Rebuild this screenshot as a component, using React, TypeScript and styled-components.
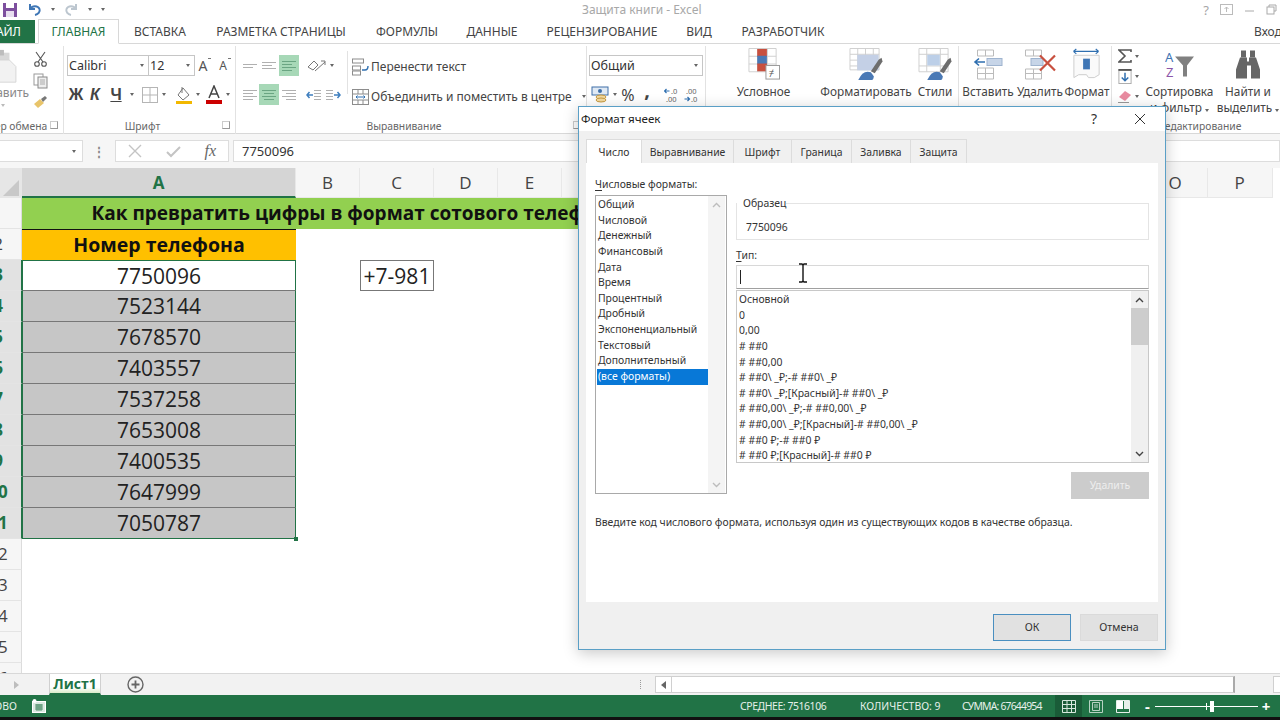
import styled, { createGlobalStyle } from "styled-components";

const GlobalStyle = createGlobalStyle`
  html, body { margin: 0; padding: 0; background: #fff; }
  body { font-family: "Noto Sans", "Open Sans", sans-serif; color: #444; }
`;

const CELL_FONT = `"Open Sans", "Noto Sans", sans-serif`;

const COLUMNS = ["A", "B", "C", "D", "E", "F", "G", "H", "I", "J", "K", "L", "M", "N", "O", "P"];
const PHONES = ["7750096", "7523144", "7678570", "7403557", "7537258", "7653008", "7400535", "7647999", "7050787"];
const CATEGORIES = ["Общий", "Числовой", "Денежный", "Финансовый", "Дата", "Время", "Процентный", "Дробный", "Экспоненциальный", "Текстовый", "Дополнительный", "(все форматы)"];
const CODES = [
  "Основной", "0", "0,00", "# ##0", "# ##0,00", "# ##0\\ _₽;-# ##0\\ _₽", "# ##0\\ _₽;[Красный]-# ##0\\ _₽",
  "# ##0,00\\ _₽;-# ##0,00\\ _₽", "# ##0,00\\ _₽;[Красный]-# ##0,00\\ _₽", "# ##0 ₽;-# ##0 ₽", "# ##0 ₽;[Красный]-# ##0 ₽",
];

const Root = styled.div`
  position: relative;
  width: 1280px;
  height: 720px;
  overflow: hidden;
  display: flex;
  flex-direction: column;
  background: #fff;
`;

const Gap = styled.span<{ $w: number }>`
  width: ${(p) => p.$w}px;
  flex: none;
`;

/* title bar + tabs */
const TitleBar = styled.div`
  position: relative;
  height: 19px;
  display: flex;
  align-items: center;
  gap: 9px;
  padding: 0 2px;
`;

const TitleText = styled.div`
  position: absolute;
  left: 582px;
  top: 0;
  font-size: 12px;
  line-height: 19px;
  color: #a8a8a8;
  white-space: nowrap;
`;

const WindowButtons = styled.div`
  margin-left: auto;
  display: flex;
  align-items: center;
  gap: 11px;
  color: #a6a6a6;
  font-size: 13px;
`;

const TabBar = styled.div`
  height: 25px;
  display: flex;
  align-items: stretch;
  border-bottom: 1px solid #d8d8d8;
  box-sizing: border-box;
`;

const FileTab = styled.div`
  width: 35px;
  background: #217346;
  color: #fff;
  font-size: 12px;
  line-height: 24px;
  overflow: hidden;
  margin-top: 1px;
  white-space: nowrap;
  padding-right: 14px;
  box-sizing: border-box;
  direction: rtl;
`;

const RibbonTab = styled.div<{ $active?: boolean; $width: number }>`
  width: ${(p) => p.$width}px;
  flex: none;
  text-align: center;
  font-size: 12px;
  line-height: 25px;
  white-space: nowrap;
  color: ${(p) => (p.$active ? "#217346" : "#444")};
  ${(p) => p.$active && `
    background: #fff;
    border: 1px solid #d8d8d8;
    border-bottom: 1px solid #fff;
    height: 25px;
    box-sizing: border-box;
    line-height: 24px;
  `}
`;

const SignIn = styled.div`
  margin-left: auto;
  font-size: 12px;
  line-height: 25px;
  color: #444;
  width: 26px;
  overflow: hidden;
  white-space: nowrap;
`;

/* ribbon */
const Ribbon = styled.div`
  height: 90px;
  display: flex;
  border-bottom: 1px solid #d8d8d8;
  box-sizing: border-box;
`;

const Group = styled.div<{ $width: number; $noline?: boolean }>`
  position: relative;
  width: ${(p) => p.$width}px;
  flex: none;
  display: flex;
  flex-direction: column;
  box-sizing: border-box;
  border-right: ${(p) => (p.$noline ? "none" : "1px solid #e2e2e2")};
  margin: 2px 0 -1px;
  overflow: hidden;
`;

const GroupBody = styled.div`
  flex: 1;
  display: flex;
  min-height: 0;
`;

const GroupLabel = styled.div<{ $shift?: number }>`
  height: 18px;
  font-size: 10.3px;
  line-height: 20px;
  color: #666;
  text-align: center;
  white-space: nowrap;
  position: relative;
  left: ${(p) => p.$shift ?? 0}px;
  flex: none;
`;

const Launcher = styled.span`
  position: absolute;
  right: 5px;
  bottom: 5px;
  width: 6px;
  height: 6px;
  border-left: 1px solid #ccc;
  border-top: 1px solid #ccc;
  border-right: 1px solid #999;
  border-bottom: 1px solid #999;
`;

const ClipColumn = styled.div`
  display: flex;
  flex-direction: column;
  align-items: center;
  width: 66px;
  flex: none;
  margin-left: -30px;
  padding-top: 3px;
  font-size: 12px;
  line-height: 16px;
  color: #8a8a8a;
  svg { margin-bottom: 1px; }
`;

const ClipSide = styled.div`
  display: flex;
  flex-direction: column;
  gap: 6px;
  padding: 5px 0 0;
  margin-left: -3px;
`;

const StackRows = styled.div<{ $width?: number }>`
  flex: ${(p) => (p.$width ? "none" : 1)};
  width: ${(p) => (p.$width ? `${p.$width}px` : "auto")};
  display: flex;
  flex-direction: column;
  padding-top: 9px;
  gap: 8px;
`;

const ToolRow = styled.div<{ $gap?: number; $pad?: number }>`
  display: flex;
  align-items: center;
  height: 21px;
  gap: ${(p) => p.$gap ?? 0}px;
  padding-left: ${(p) => p.$pad ?? 0}px;
`;

const SelectBox = styled.div<{ $width: number }>`
  width: ${(p) => p.$width}px;
  height: 21px;
  box-sizing: border-box;
  border: 1px solid #c6c6c6;
  font-size: 12.5px;
  line-height: 19px;
  padding-left: 1px;
  position: relative;
  flex: none;
  color: #333;
  & + & { margin-left: -1px; }
`;

const Caret = styled.span<{ $inline?: boolean }>`
  display: inline-block;
  width: 0;
  height: 0;
  border-left: 2.5px solid transparent;
  border-right: 2.5px solid transparent;
  border-top: 3px solid #666;
  flex: none;
  ${(p) => !p.$inline && `
    position: absolute;
    right: 4px;
    top: 8px;
  `}
`;

const PasteCaret = styled(Caret)`
  margin-top: 3px;
  border-top-color: #bbb;
`;

const NameCaret = styled(Caret)`
  right: 6px;
  top: 9px;
`;

const StyleBold = styled.span<{ $width: number; $italic?: boolean; $under?: boolean }>`
  width: ${(p) => p.$width}px;
  text-align: center;
  font-family: "Liberation Sans", sans-serif;
  font-weight: 700;
  font-size: 16px;
  color: #444;
  font-style: ${(p) => (p.$italic ? "italic" : "normal")};
  text-decoration: ${(p) => (p.$under ? "underline" : "none")};
  flex: none;
`;

const GrowFont = styled.span<{ $small?: boolean }>`
  font-size: ${(p) => (p.$small ? 12 : 14)}px;
  line-height: 16px;
  color: #555;
  width: 20px;
  text-align: center;
  flex: none;
  position: relative;
  left: -2px;
  &::after {
    content: "";
    position: absolute;
    right: 2px;
    top: 0;
    width: 3px;
    height: 1px;
    background: #777;
  }
`;

const Percent = styled.span`
  font-size: 16px;
  width: 20px;
  text-align: center;
  flex: none;
`;

const Comma = styled.span`
  font-size: 20px;
  font-weight: 700;
  width: 18px;
  height: 24px;
  text-align: center;
  line-height: 14px;
  flex: none;
`;

const ToolCell = styled.span<{ $active?: boolean; $width?: number }>`
  width: ${(p) => p.$width ?? 20}px;
  height: ${(p) => (p.$active ? 21 : 19)}px;
  display: flex;
  align-items: center;
  justify-content: center;
  background: ${(p) => (p.$active ? "#a7d8b7" : "transparent")};
  flex: none;
`;

const InnerLine = styled.div`
  width: 1px;
  background: #e2e2e2;
  margin: 5px 0 22px;
  flex: none;
`;

const WrapRows = styled.div`
  display: flex;
  flex-direction: column;
  padding: 10px 0 0 4px;
  gap: 9px;
`;

const WrapRow = styled.div`
  display: flex;
  align-items: center;
  gap: 2px;
  font-size: 12px;
  height: 21px;
  color: #444;
  white-space: nowrap;
`;

const BigTool = styled.div<{ $width: number }>`
  width: ${(p) => p.$width}px;
  flex: none;
  display: flex;
  flex-direction: column;
  align-items: center;
  padding-top: 2px;
  font-size: 11.8px;
  line-height: 16px;
  text-align: center;
  color: #444;
  white-space: nowrap;
  svg {
    height: 33px;
    margin-bottom: 2px;
    flex: none;
  }
`;

const MiniColumn = styled.div`
  width: 33px;
  flex: none;
  display: flex;
  flex-direction: column;
  gap: 6px;
  padding: 3px 0 0 6px;
  box-sizing: border-box;
`;

const MiniRow = styled.div`
  display: flex;
  align-items: center;
  gap: 3px;
`;

/* formula bar */
const FormulaBar = styled.div`
  height: 34px;
  display: flex;
  align-items: flex-start;
  padding-top: 6px;
  box-sizing: border-box;
  background: #f6f6f6;
`;

const NameBox = styled.div`
  width: 83px;
  height: 22px;
  background: #fff;
  border-right: 1px solid #ddd;
  border-bottom: 1px solid #ddd;
  border-top: 1px solid #ddd;
  box-sizing: border-box;
  position: relative;
  flex: none;
`;

const Grip = styled.div`
  width: 32px;
  height: 22px;
  flex: none;
  display: flex;
  align-items: center;
  justify-content: center;
  color: #888;
  font-size: 12px;
  font-weight: 700;
`;

const FxBox = styled.div`
  width: 114px;
  height: 22px;
  background: #fff;
  border: 1px solid #ddd;
  box-sizing: border-box;
  flex: none;
  display: flex;
  align-items: center;
  justify-content: space-between;
  padding: 0 12px;
`;

const FxLabel = styled.span`
  font-family: "Liberation Serif", serif;
  font-style: italic;
  font-size: 16px;
  color: #666;
`;

const FormulaInput = styled.div`
  flex: 1;
  margin-left: 4px;
  height: 22px;
  background: #fff;
  border: 1px solid #ddd;
  box-sizing: border-box;
  font-size: 13px;
  line-height: 20px;
  padding-left: 8px;
  color: #333;
`;

/* sheet */
const Sheet = styled.div`
  flex: 1;
  min-height: 0;
  display: grid;
  grid-template-columns: 22px 274px 64px 74px 64px 64px repeat(11, 64.6px);
  grid-template-rows: 30px;
  grid-auto-rows: 31px;
  overflow: hidden;
  background: #fff;
`;

const Corner = styled.div`
  grid-column: 1;
  grid-row: 1;
  background: #e6e6e6;
  position: relative;
  overflow: hidden;
  &::after {
    content: "";
    position: absolute;
    right: 3px;
    bottom: 2px;
    width: 0;
    height: 0;
    border-left: 16px solid transparent;
    border-bottom: 16px solid #c8c8c8;
  }
`;

const ColHead = styled.div<{ $col: number; $active?: boolean }>`
  grid-column: ${(p) => p.$col};
  grid-row: 1;
  background: ${(p) => (p.$active ? "#d5d5d5" : "#f6f6f6")};
  color: ${(p) => (p.$active ? "#217346" : "#444")};
  font-family: ${CELL_FONT};
  font-weight: ${(p) => (p.$active ? 700 : 400)};
  font-size: 17px;
  display: flex;
  align-items: center;
  justify-content: center;
  box-sizing: border-box;
  border-right: 1px solid #e8e8e8;
  border-bottom: ${(p) => (p.$active ? "2px solid #217346" : "1px solid #e8e8e8")};
`;

const RowHead = styled.div<{ $row: number; $active?: boolean }>`
  grid-column: 1;
  grid-row: ${(p) => p.$row};
  background: ${(p) => (p.$active ? "#e2e2e2" : "#f6f6f6")};
  color: ${(p) => (p.$active ? "#217346" : "#444")};
  font-family: ${CELL_FONT};
  font-weight: ${(p) => (p.$active ? 700 : 400)};
  font-size: 17px;
  box-sizing: border-box;
  border-right: 1px solid ${(p) => (p.$active ? "#217346" : "#dcdcdc")};
  border-bottom: 1px solid #e4e4e4;
  overflow: hidden;
  line-height: 30px;
  span {
    display: block;
    width: 24px;
    margin-left: -14px;
    text-align: center;
  }
`;

const TitleCell = styled.div`
  grid-column: 2 / span 7;
  grid-row: 2;
  background: #92d050;
  font-family: ${CELL_FONT};
  font-weight: 700;
  font-size: 19.05px;
  line-height: 30px;
  color: #111;
  text-align: center;
  white-space: nowrap;
  padding-right: 2px;
`;

const HeaderCell = styled.div`
  grid-column: 2;
  grid-row: 3;
  background: #ffc000;
  border-top: 1px solid #111;
  font-family: ${CELL_FONT};
  font-weight: 700;
  font-size: 19.5px;
  line-height: 29px;
  color: #111;
  text-align: center;
  box-sizing: border-box;
`;

const PhoneCell = styled.div<{ $row: number; $current?: boolean; $last?: boolean }>`
  grid-column: 2;
  grid-row: ${(p) => p.$row};
  position: relative;
  background: ${(p) => (p.$current ? "#fff" : "#c6c6c6")};
  font-family: ${CELL_FONT};
  font-size: 21px;
  line-height: 30px;
  color: #222;
  text-align: center;
  box-sizing: border-box;
  border-left: 1.5px solid #217346;
  border-right: 1.5px solid #217346;
  border-top: ${(p) => (p.$current ? "1.5px solid #217346" : "none")};
  border-bottom: ${(p) => (p.$last ? "1.5px solid #217346" : "1px solid #777")};
  ${(p) => p.$last && `
    &::after {
      content: "";
      position: absolute;
      right: -3px;
      bottom: -3px;
      width: 4px;
      height: 4px;
      background: #217346;
    }
  `}
`;

const FormulaCell = styled.div`
  grid-column: 4;
  grid-row: 4;
  border: 1px solid #777;
  box-sizing: border-box;
  font-family: ${CELL_FONT};
  font-size: 21px;
  line-height: 30px;
  color: #222;
  text-align: center;
  white-space: nowrap;
`;

/* sheet tabs */
const SheetTabs = styled.div`
  height: 22px;
  display: flex;
  align-items: stretch;
  background: #f2f2f2;
  border-top: 1px solid #d8d8d8;
  box-sizing: border-box;
`;

const TabNav = styled.div`
  width: 49px;
  flex: none;
  display: flex;
  align-items: center;
  justify-content: flex-end;
  padding-right: 30px;
  box-sizing: border-box;
`;

const SheetTab = styled.div`
  width: 52px;
  flex: none;
  background: linear-gradient(#fff 70%, #d9ecc9);
  border-left: 1px solid #d0d0d0;
  border-right: 1px solid #d0d0d0;
  border-bottom: 2px solid #217346;
  box-sizing: border-box;
  color: #217346;
  font-family: ${CELL_FONT};
  font-weight: 700;
  font-size: 14px;
  line-height: 20px;
  text-align: center;
`;

const AddSheet = styled.div`
  margin-left: 26px;
  display: flex;
  align-items: center;
  flex: none;
`;

const HScroll = styled.div`
  margin-left: auto;
  display: flex;
  align-items: stretch;
  flex: none;
`;

const HDots = styled.span`
  width: 3px;
  align-self: center;
  height: 9px;
  margin-right: 11px;
  border-left: 1px dotted #999;
  flex: none;
`;

const HTrack = styled.div`
  width: 563px;
  background: #fff;
  border: 1px solid #d0d0d0;
  border-left: none;
  border-right: 2px solid #aaa;
  box-sizing: border-box;
  margin: 2px 0;
  flex: none;
`;

const HButton = styled.div`
  width: 17px;
  margin: 2px 0;
  background: #fff;
  border: 1px solid #d0d0d0;
  box-sizing: border-box;
  display: flex;
  align-items: center;
  justify-content: center;
  flex: none;
`;

const HGap = styled.div`
  width: 38px;
  flex: none;
`;

const HEnd = styled(HButton)`
  width: 7px;
  border-right: none;
  justify-content: flex-end;
`;

/* status bar */
const StatusBar = styled.div`
  height: 22px;
  background: #217346;
  color: #e6f0ea;
  font-size: 10.4px;
  display: flex;
  align-items: center;
  white-space: nowrap;
`;

const StatusText = styled.span<{ $width: number; $left: number; $spacing?: number }>`
  width: ${(p) => p.$width}px;
  margin-left: ${(p) => p.$left}px;
  letter-spacing: ${(p) => p.$spacing ?? 0}px;
  flex: none;
`;

const ViewButton = styled.span<{ $active?: boolean }>`
  width: 27px;
  height: 22px;
  display: flex;
  align-items: center;
  justify-content: center;
  background: ${(p) => (p.$active ? "#1a5c38" : "transparent")};
  flex: none;
`;

const ZoomSlider = styled.div`
  position: relative;
  width: 103px;
  height: 1px;
  background: #fff;
  margin: 0 4px 0 5px;
  flex: none;
  &::before {
    content: "";
    position: absolute;
    left: 51px;
    top: -3px;
    width: 1px;
    height: 7px;
    background: #fff;
  }
  &::after {
    content: "";
    position: absolute;
    left: 55px;
    top: -5px;
    width: 4px;
    height: 11px;
    background: #fff;
  }
`;

const ZoomSign = styled.span`
  color: #fff;
  font-weight: 700;
  font-size: 15px;
  line-height: 22px;
  flex: none;
`;

const BottomStrip = styled.div`
  height: 3px;
  background: #111;
  flex: none;
`;

/* dialog */
const Dialog = styled.div`
  position: absolute;
  left: 578px;
  top: 106px;
  width: 588px;
  height: 544px;
  box-sizing: border-box;
  border: 1.5px solid #5a9fc6;
  background: #f0f0f0;
  box-shadow: 0 3px 14px rgba(0, 0, 0, 0.22);
  display: flex;
  flex-direction: column;
`;

const DialogTitle = styled.div`
  height: 24px;
  flex: none;
  background: #fff;
  display: flex;
  align-items: center;
  padding: 0 19px 0 2px;
  font-size: 11.6px;
  line-height: 22px;
  color: #222;
`;

const HelpMark = styled.span`
  margin-left: auto;
  margin-right: 37px;
  font-size: 14px;
  color: #333;
`;

const DialogTabs = styled.div`
  display: flex;
  margin: 8px 0 0 7px;
  height: 24px;
  flex: none;
`;

const DialogTab = styled.div<{ $active?: boolean; $width: number }>`
  width: ${(p) => p.$width}px;
  flex: none;
  background: ${(p) => (p.$active ? "#fff" : "#f0f0f0")};
  border: 1px solid #dcdcdc;
  border-bottom: none;
  border-left: ${(p) => (p.$active ? "1px solid #dcdcdc" : "none")};
  box-sizing: border-box;
  font-size: 10.4px;
  line-height: 25px;
  text-align: center;
  color: #333;
`;

const Panel = styled.div`
  width: 572px;
  height: 439px;
  margin-left: 7px;
  flex: none;
  background: #fff;
  box-sizing: border-box;
  padding: 13px 9px 0;
  display: flex;
  flex-direction: column;
`;

const FieldLabel = styled.div`
  font-size: 10.4px;
  line-height: 16px;
  color: #333;
  white-space: nowrap;
  u { text-underline-offset: 2px; }
`;

const PanelColumns = styled.div`
  display: flex;
  gap: 9px;
`;

const LeftColumn = styled.div`
  width: 132px;
  flex: none;
`;

const ListBox = styled.div`
  width: 132px;
  height: 299px;
  margin-top: 3px;
  box-sizing: border-box;
  border: 1px solid #a9a9a9;
  padding: 0 1px;
  display: flex;
`;

const ListItems = styled.div`
  flex: 1;
  padding-top: 1px;
`;

const ListItem = styled.div<{ $selected?: boolean }>`
  height: 15.65px;
  font-size: 10.4px;
  line-height: 15.65px;
  padding-left: 1px;
  white-space: nowrap;
  color: ${(p) => (p.$selected ? "#fff" : "#333")};
  background: ${(p) => (p.$selected ? "#0878d7" : "transparent")};
`;

const ScrollBar = styled.div<{ $dim?: boolean }>`
  width: 17px;
  flex: none;
  display: flex;
  flex-direction: column;
  background: ${(p) => (p.$dim ? "#f4f4f4" : "#f0f0f0")};
`;

const ScrollArrow = styled.div`
  height: 17px;
  display: flex;
  align-items: center;
  justify-content: center;
  flex: none;
`;

const ScrollThumb = styled.div`
  height: 37px;
  background: #cdcdcd;
  flex: none;
`;

const ScrollGap = styled.div`
  flex: 1;
`;

const RightColumn = styled.div`
  width: 413px;
  flex: none;
  padding-top: 21px;
`;

const SampleBox = styled.fieldset`
  margin: 0;
  height: 43px;
  box-sizing: border-box;
  border: 1px solid #e4e4e4;
  padding: 0 0 0 9px;
  font-size: 10.4px;
  line-height: 14px;
  color: #333;
  position: relative;
  legend {
    padding: 0 0 0 6px;
    margin-left: -9px;
    font-size: 10.4px;
    line-height: 12px;
    color: #333;
  }
  div { padding-top: 11px; }
`;

const TypeLabel = styled(FieldLabel)`
  margin-top: 7px;
`;

const TypeInput = styled.div`
  position: relative;
  height: 24px;
  margin-top: 2px;
  box-sizing: border-box;
  border: 1px solid #d8d8d8;
  border-bottom: 1px solid #a0a0a0;
  &::before {
    content: "";
    position: absolute;
    left: 3px;
    top: 4px;
    width: 1px;
    height: 14px;
    background: #222;
  }
`;

const CodeBox = styled.div`
  height: 173px;
  margin-top: 1px;
  box-sizing: border-box;
  border: 1px solid #c8c8c8;
  display: flex;
`;

const CodeItems = styled.div`
  flex: 1;
  padding: 1px 0 0 1px;
  overflow: hidden;
`;

const CodeItem = styled(ListItem)`
  color: #333;
`;

const DeleteRow = styled.div`
  display: flex;
  justify-content: flex-end;
  margin-top: 9px;
`;

const DisabledButton = styled.div`
  width: 78px;
  height: 27px;
  background: #cccccc;
  color: #eeeeee;
  font-size: 10.4px;
  line-height: 27px;
  text-align: center;
`;

const Hint = styled.div`
  font-size: 10.4px;
  line-height: 15px;
  color: #333;
  margin-top: 16px;
`;

const DialogFooter = styled.div`
  display: flex;
  justify-content: flex-end;
  gap: 9px;
  padding: 12px 7px 0 0;
`;

const DialogButton = styled.div<{ $primary?: boolean }>`
  width: 78px;
  height: 27px;
  box-sizing: border-box;
  background: #e1e1e1;
  border: ${(p) => (p.$primary ? "1.5px solid #4a8fc0" : "1px solid #dadada")};
  font-size: 10.6px;
  line-height: 25px;
  text-align: center;
  color: #333;
`;

const IBeam = styled.svg`
  position: absolute;
  left: 798px;
  top: 263px;
`;

const FlipSvg = styled.svg<{ $flip?: boolean }>`
  transform: ${(p) => (p.$flip ? "scaleX(-1)" : "none")};
  flex: none;
`;

const Lines = ({ w = 14, align = "left", rows = 4, color = "#b0b0b0" }: { w?: number; align?: string; rows?: number; color?: string }) => {
  const lines = Array.from({ length: rows }, (_, i) => {
    const short = i % 2 === 1 ? w - 4 : w;
    const x = align === "left" ? 0 : align === "center" ? (w - short) / 2 : w - short;
    return <line key={i} x1={x} x2={x + short} y1={1.5 + i * 3} y2={1.5 + i * 3} stroke={color} />;
  });
  return <svg width={w} height={rows * 3}>{lines}</svg>;
};

const SaveIcon = () => (
  <svg width="16" height="16" viewBox="0 0 16 16">
    <rect x="1" y="1" width="14" height="14" fill="#7d4f9e" />
    <rect x="4" y="1" width="8" height="5" fill="#fff" />
    <rect x="4" y="9" width="8" height="6" fill="#e8dff0" />
  </svg>
);

const UndoIcon = ({ color, flip }: { color: string; flip?: boolean }) => (
  <FlipSvg $flip={flip} width="15" height="15" viewBox="0 0 15 15">
    <path d="M3 2 v5 h5 M3.5 6.5 C5 3.5 11 3 12.5 7 C13.5 10 11 12.5 8 13" fill="none" stroke={color} strokeWidth="2" />
  </FlipSvg>
);

const Scissors = () => (
  <svg width="15" height="16" viewBox="0 0 15 16" fill="none" stroke="#555" strokeWidth="1.1">
    <path d="M3 1 L10 11 M12 1 L5 11" />
    <circle cx="4" cy="13" r="2.3" />
    <circle cx="11" cy="13" r="2.3" />
  </svg>
);

const CopyIcon = () => (
  <svg width="16" height="16" viewBox="0 0 16 16">
    <rect x="1" y="1" width="9" height="11" fill="#fff" stroke="#9a9a9a" />
    <rect x="5" y="4" width="9" height="11" fill="#eee" stroke="#8a8a8a" />
    <path d="M7 7h5M7 9h5M7 11h5" stroke="#aaa" />
  </svg>
);

const BrushIcon = () => (
  <svg width="15" height="14" viewBox="0 0 15 14">
    <path d="M1 9 L7 4 L11 8 L5 13 Z" fill="#e8c46a" />
    <path d="M8 4 L12 1 L14 3 L10 7 Z" fill="#777" />
  </svg>
);

const PasteIcon = () => (
  <svg width="34" height="35" viewBox="0 0 34 38">
    <rect x="2" y="4" width="22" height="28" fill="#d8d8d8" />
    <rect x="8" y="1" width="10" height="6" fill="#bdbdbd" />
    <path d="M12 12 h12 l7 7 v17 h-19 Z" fill="#f2f2f2" stroke="#d4d4d4" />
  </svg>
);

const BorderIcon = () => (
  <svg width="16" height="16" viewBox="0 0 16 16" fill="none" stroke="#b5b5b5">
    <rect x="0.5" y="0.5" width="15" height="15" />
    <path d="M8 0v16M0 8h16" />
  </svg>
);

const FillIcon = () => (
  <svg width="18" height="18" viewBox="0 0 18 18">
    <path d="M8 2 L14 9 L8 14 L3 9 Z" fill="#fff" stroke="#777" />
    <path d="M7 1v6" stroke="#777" />
    <rect x="1" y="15" width="16" height="3" fill="#f2b800" />
  </svg>
);

const ColorIcon = () => (
  <svg width="18" height="19" viewBox="0 0 18 19">
    <path d="M4 13 L9 1 L14 13 M6 9 H12" fill="none" stroke="#444" strokeWidth="1.5" />
    <rect x="1" y="15" width="16" height="4" fill="#cc0000" />
  </svg>
);

const OrientIcon = () => (
  <svg width="20" height="14" viewBox="0 0 20 14" fill="none" stroke="#777">
    <path d="M1 8 L7 2 L11 6 L6 11 Z" />
    <path d="M8 12 L18 3 M14 2 h4 v4" />
  </svg>
);

const IndentIcon = ({ flip }: { flip?: boolean }) => (
  <FlipSvg $flip={flip} width="15" height="12" viewBox="0 0 15 12">
    <path d="M8 1.5h7M8 4.5h7M8 7.5h7M8 10.5h7" stroke="#b0b0b0" />
    <path d="M7 6 H1 M3.5 3 L1 6 L3.5 9" fill="none" stroke="#3f7fbf" strokeWidth="1.5" />
  </FlipSvg>
);

const WrapIcon = () => (
  <svg width="17" height="18" viewBox="0 0 17 18" fill="none" stroke="#8c8c8c">
    <rect x="0.5" y="1" width="11" height="4" />
    <rect x="0.5" y="8" width="8" height="4" />
    <rect x="0.5" y="13" width="8" height="4" />
    <path d="M10 12 h3 q3 0 3-4" stroke="#2f6fb0" strokeWidth="1.4" />
  </svg>
);

const MergeIcon = () => (
  <svg width="17" height="16" viewBox="0 0 17 16" fill="none" stroke="#8c8c8c">
    <rect x="0.5" y="0.5" width="16" height="15" />
    <path d="M0 5h17M0 11h17M6 0v5M11 0v5M6 11v5M11 11v5" />
    <path d="M4 8h9M5.5 6.5L4 8l1.5 1.5M11.5 6.5L13 8l-1.5 1.5" stroke="#2f6fb0" />
  </svg>
);

const AccountingIcon = () => (
  <svg width="18" height="18" viewBox="0 0 18 18">
    <rect x="1" y="1" width="16" height="8" fill="#dfe9f4" stroke="#3f6fa8" />
    <circle cx="9" cy="5" r="2" fill="#3f6fa8" />
    <ellipse cx="10" cy="11" rx="5" ry="2" fill="#f2d9a0" stroke="#c79a40" />
    <ellipse cx="10" cy="14" rx="5" ry="2" fill="#f2d9a0" stroke="#c79a40" />
  </svg>
);

const DecimalIcon = ({ more }: { more?: boolean }) => (
  <svg width="15" height="16" viewBox="0 0 15 16" fontFamily="Noto Sans" fontSize="7.5" fill="#666">
    {more ? (
      <>
        <path d="M0.5 4 h5 M2.5 2 L0.5 4 L2.5 6" fill="none" stroke="#2f6fb0" strokeWidth="1.2" />
        <text x="7" y="7">.0</text>
        <text x="2" y="15">.00</text>
      </>
    ) : (
      <>
        <text x="2" y="7">.00</text>
        <path d="M0.5 12 h5 M3.5 10 L5.5 12 L3.5 14" fill="none" stroke="#2f6fb0" strokeWidth="1.2" />
        <text x="7" y="15">.0</text>
      </>
    )}
  </svg>
);

const ConditionalIcon = () => (
  <svg width="32" height="34" viewBox="0 0 32 34">
    <path d="M0.5 0.5h28v24h-28zM0.5 8.5h28M0.5 16.5h28M9.5 0.5v24M19.5 0.5v24" fill="#fff" stroke="#cfcfcf" />
    <rect x="9" y="1" width="10" height="8" fill="#c8503f" />
    <rect x="9" y="8" width="10" height="9" fill="#4a79b5" />
    <rect x="9" y="16" width="10" height="8" fill="#c8503f" />
    <rect x="18" y="18" width="14" height="14" fill="#fff" stroke="#999" />
    <text x="21" y="29" fontSize="10" fill="#555" fontFamily="Noto Sans">≠</text>
  </svg>
);

const TableIcon = () => (
  <svg width="34" height="34" viewBox="0 0 34 34">
    <path d="M0.5 0.5h30v22h-30zM0.5 6.5h30M0.5 12.5h30M0.5 18.5h30M8.5 0.5v22M16.5 0.5v22M24.5 0.5v22" fill="#fff" stroke="#cfcfcf" />
    <rect x="8" y="7" width="22" height="16" fill="#c4d0e6" />
    <path d="M22 24 L30 12 L33 10 L34 14 L26 26 Z" fill="#6d6d6d" />
    <path d="M9 33 Q14 22 22 25 L25 29 Q25 33 22 33 Z" fill="#4a79b5" />
  </svg>
);

const CellStyleIcon = () => (
  <svg width="34" height="34" viewBox="0 0 34 34">
    <path d="M0.5 0.5h30v24h-30zM8.5 0.5v24M22.5 0.5v24M0.5 6.5h30M0.5 18.5h30" fill="#fff" stroke="#cfcfcf" />
    <rect x="9" y="7" width="13" height="11" fill="#bccfe8" />
    <path d="M22 24 L30 12 L33 10 L34 14 L26 26 Z" fill="#6d6d6d" />
    <path d="M9 33 Q14 22 22 25 L25 29 Q25 33 22 33 Z" fill="#4a79b5" />
  </svg>
);

const InsertCellIcon = () => (
  <svg width="30" height="32" viewBox="0 0 30 32">
    <path d="M4.5 1.5h16v6h-16zM12.5 1.5v6M4.5 19.5h16v11h-16zM4.5 25h16M12.5 19.5v11" fill="#fff" stroke="#bbb" />
    <rect x="14" y="10" width="15" height="7" fill="#c7d5e8" stroke="#9fb4cf" />
    <path d="M12 13.5H2M6 10L2 13.5L6 17" fill="none" stroke="#2f6fb0" strokeWidth="1.6" />
  </svg>
);

const DeleteCellIcon = () => (
  <svg width="32" height="32" viewBox="0 0 32 32">
    <path d="M1.5 1.5h16v6h-16zM9.5 1.5v6M1.5 20.5h16v10h-16zM1.5 25h16M9.5 20.5v10" fill="#fff" stroke="#bbb" />
    <rect x="7" y="10" width="12" height="7" fill="#c7d5e8" stroke="#9fb4cf" />
    <path d="M16 7 L31 22 M31 7 L16 22" stroke="#c8503f" strokeWidth="2.2" />
  </svg>
);

const FormatCellIcon = () => (
  <svg width="30" height="34" viewBox="0 0 30 34">
    <path d="M1 3.5h26M1 3.5l3-2.5M1 3.5l3 2.5M27 3.5l-3-2.5M27 3.5l-3 2.5" fill="none" stroke="#2f6fb0" strokeWidth="1.2" />
    <path d="M1.5 7.5h26v20l-5 3h-6l-2-3h-8l-5 3z" fill="#fafafa" stroke="#ccc" />
    <rect x="11" y="11" width="7" height="11" fill="#3f76b5" />
  </svg>
);

const SigmaIcon = () => (
  <svg width="14" height="14" viewBox="0 0 14 14">
    <path d="M13 3 V1 H1 L7 7 L1 13 H13 V11" fill="none" stroke="#555" strokeWidth="1.6" />
  </svg>
);

const FillDownIcon = () => (
  <svg width="14" height="15" viewBox="0 0 14 16">
    <rect x="0.5" y="0.5" width="13" height="15" fill="#fff" stroke="#aaa" />
    <rect x="0" y="0" width="14" height="2" fill="#555" />
    <path d="M7 4v8M3.5 9L7 12.5L10.5 9" fill="none" stroke="#2f6fb0" strokeWidth="1.6" />
  </svg>
);

const EraserIcon = () => (
  <svg width="14" height="13" viewBox="0 0 14 13">
    <path d="M1 7 L7 1 L13 5 L7 11 Z" fill="#e88ba0" />
    <path d="M0 12.5h11" stroke="#999" />
  </svg>
);

const SortIcon = () => (
  <svg width="30" height="30" viewBox="0 0 30 30">
    <text x="0" y="12" fontSize="13" fill="#3f76b5" fontFamily="Noto Sans">A</text>
    <text x="1" y="27" fontSize="13" fill="#8b55a8" fontFamily="Noto Sans">Z</text>
    <path d="M10 7 H29 L22 16 V27 H18 V16 Z" fill="#808080" />
  </svg>
);

const FindIcon = () => (
  <svg width="28" height="30" viewBox="0 0 28 30" fill="#666">
    <rect x="7" y="1" width="5" height="7" />
    <rect x="16" y="1" width="5" height="7" />
    <path d="M6 8h7v4h2V8h7l4 12v9h-9V16h-4v13H2v-9z" />
  </svg>
);

const ChevronUp = ({ color = "#777" }: { color?: string }) => (
  <svg width="9" height="6" viewBox="0 0 9 6"><path d="M1 5 L4.5 1.5 L8 5" fill="none" stroke={color} strokeWidth="1.4" /></svg>
);

const ChevronDown = ({ color = "#555" }: { color?: string }) => (
  <svg width="9" height="6" viewBox="0 0 9 6"><path d="M1 1 L4.5 4.5 L8 1" fill="none" stroke={color} strokeWidth="1.4" /></svg>
);

const Triangle = ({ flip, color = "#888" }: { flip?: boolean; color?: string }) => (
  <FlipSvg $flip={flip} width="5" height="8" viewBox="0 0 5 8">
    <path d="M0 0 L5 4 L0 8 Z" fill={color} />
  </FlipSvg>
);

export default function App() {
  const inactiveTabs: [string, number][] = [
    ["ВСТАВКА", 82], ["РАЗМЕТКА СТРАНИЦЫ", 160], ["ФОРМУЛЫ", 92], ["ДАННЫЕ", 78], ["РЕЦЕНЗИРОВАНИЕ", 142], ["ВИД", 52], ["РАЗРАБОТЧИК", 116],
  ];
  const dialogTabs: [string, number, boolean][] = [
    ["Число", 56, true], ["Выравнивание", 92, false], ["Шрифт", 58, false], ["Граница", 60, false], ["Заливка", 59, false], ["Защита", 56, false],
  ];

  return (
    <>
      <GlobalStyle />
      <Root>
        <TitleBar>
          <SaveIcon />
          <UndoIcon color="#3f76b5" />
          <Caret $inline />
          <UndoIcon color="#bcc6cf" flip />
          <Caret $inline />
          <Caret $inline />
          <TitleText>Защита книги - Excel</TitleText>
          <WindowButtons>
            <span>?</span>
            <svg width="13" height="11" viewBox="0 0 13 11" fill="none" stroke="#bbb"><rect x="0.5" y="0.5" width="12" height="10" /><path d="M6.5 8V3M4.5 5l2-2 2 2" /></svg>
            <svg width="11" height="11" viewBox="0 0 11 11"><path d="M1 7h9" stroke="#aaa" /></svg>
            <svg width="12" height="11" viewBox="0 0 12 11" fill="none" stroke="#aaa"><rect x="1" y="3" width="7" height="7" /><path d="M3 3V1h7v6H8" /></svg>
          </WindowButtons>
        </TitleBar>

        <TabBar>
          <FileTab>ФАЙЛ</FileTab>
          <RibbonTab $width={3} />
          <RibbonTab $active $width={81}>ГЛАВНАЯ</RibbonTab>
          {inactiveTabs.map(([name, width]) => (
            <RibbonTab key={name} $width={width}>{name}</RibbonTab>
          ))}
          <SignIn>Вход</SignIn>
        </TabBar>

        <Ribbon>
          <Group $width={64}>
            <GroupBody>
              <ClipColumn>
                <PasteIcon />
                <span>Вставить</span>
                <PasteCaret $inline />
              </ClipColumn>
              <ClipSide>
                <Scissors />
                <CopyIcon />
                <BrushIcon />
              </ClipSide>
            </GroupBody>
            <GroupLabel $shift={-24}>Буфер обмена</GroupLabel>
            <Launcher />
          </Group>

          <Group $width={172}>
            <GroupBody>
              <StackRows>
                <ToolRow $pad={3}>
                  <SelectBox $width={82}>Calibri<Caret /></SelectBox>
                  <SelectBox $width={47}>12<Caret /></SelectBox>
                  <GrowFont>A</GrowFont>
                  <GrowFont $small>A</GrowFont>
                </ToolRow>
                <ToolRow>
                  <StyleBold $width={24}>Ж</StyleBold>
                  <StyleBold $width={14} $italic>К</StyleBold>
                  <StyleBold $width={28} $under>Ч</StyleBold>
                  <Caret $inline />
                  <Gap $w={8} />
                  <BorderIcon />
                  <Gap $w={4} />
                  <Caret $inline />
                  <Gap $w={9} />
                  <FillIcon />
                  <Gap $w={3} />
                  <Caret $inline />
                  <Gap $w={5} />
                  <ColorIcon />
                  <Gap $w={3} />
                  <Caret $inline />
                </ToolRow>
              </StackRows>
            </GroupBody>
            <GroupLabel $shift={-7}>Шрифт</GroupLabel>
            <Launcher />
          </Group>

          <Group $width={351}>
            <GroupBody>
              <StackRows $width={111}>
                <ToolRow $pad={4}>
                  <ToolCell $width={19}><Lines w={14} rows={2} /></ToolCell>
                  <ToolCell $width={20}><Lines w={14} rows={3} /></ToolCell>
                  <ToolCell $active><Lines w={14} color="#6aa582" /></ToolCell>
                  <Gap $w={8} />
                  <OrientIcon />
                  <Gap $w={3} />
                  <Caret $inline />
                </ToolRow>
                <ToolRow $pad={4}>
                  <ToolCell $width={19}><Lines w={14} /></ToolCell>
                  <ToolCell $active><Lines w={14} align="center" color="#6aa582" /></ToolCell>
                  <ToolCell $width={20}><Lines w={14} align="right" /></ToolCell>
                  <Gap $w={7} />
                  <IndentIcon />
                  <Gap $w={5} />
                  <IndentIcon flip />
                </ToolRow>
              </StackRows>
              <InnerLine />
              <WrapRows>
                <WrapRow><WrapIcon />Перенести текст</WrapRow>
                <WrapRow><MergeIcon />Объединить и поместить в центре<Gap $w={6} /><Caret $inline /></WrapRow>
              </WrapRows>
            </GroupBody>
            <GroupLabel $shift={-7}>Выравнивание</GroupLabel>
            <Launcher />
          </Group>

          <Group $width={119}>
            <GroupBody>
              <StackRows>
                <ToolRow $pad={2}>
                  <SelectBox $width={114}>Общий<Caret /></SelectBox>
                </ToolRow>
                <ToolRow $pad={4}>
                  <AccountingIcon />
                  <Gap $w={4} />
                  <Caret $inline />
                  <Gap $w={1} />
                  <Percent>%</Percent>
                  <Comma>,</Comma>
                  <Gap $w={8} />
                  <DecimalIcon more />
                  <Gap $w={5} />
                  <DecimalIcon />
                </ToolRow>
              </StackRows>
            </GroupBody>
            <GroupLabel />
            <Launcher />
          </Group>

          <Group $width={253}>
            <GroupBody>
              <BigTool $width={115}><ConditionalIcon />Условное</BigTool>
              <BigTool $width={90}><TableIcon />Форматировать</BigTool>
              <BigTool $width={48}><CellStyleIcon />Стили</BigTool>
            </GroupBody>
            <GroupLabel />
          </Group>

          <Group $width={153}>
            <GroupBody>
              <BigTool $width={58}><InsertCellIcon />Вставить</BigTool>
              <BigTool $width={46}><DeleteCellIcon />Удалить</BigTool>
              <BigTool $width={48}><FormatCellIcon />Формат</BigTool>
            </GroupBody>
            <GroupLabel />
          </Group>

          <Group $width={168} $noline>
            <GroupBody>
              <MiniColumn>
                <MiniRow><SigmaIcon /><Caret $inline /></MiniRow>
                <MiniRow><FillDownIcon /><Caret $inline /></MiniRow>
                <MiniRow><EraserIcon /><Caret $inline /></MiniRow>
              </MiniColumn>
              <BigTool $width={69}>
                <SortIcon />
                Сортировка
                <span>и фильтр <Caret $inline /></span>
              </BigTool>
              <BigTool $width={68}>
                <FindIcon />
                Найти и
                <span>выделить <Caret $inline /></span>
              </BigTool>
            </GroupBody>
            <GroupLabel $shift={4}>Редактирование</GroupLabel>
          </Group>
        </Ribbon>

        <FormulaBar>
          <NameBox><NameCaret /></NameBox>
          <Grip>⋮</Grip>
          <FxBox>
            <svg width="14" height="14" viewBox="0 0 14 14" fill="none" stroke="#c4c4c4" strokeWidth="1.4"><path d="M1 1L13 13M13 1L1 13" /></svg>
            <svg width="15" height="13" viewBox="0 0 15 13" fill="none" stroke="#c4c4c4" strokeWidth="2"><path d="M1 7L5 11L14 2" /></svg>
            <FxLabel>fx</FxLabel>
          </FxBox>
          <FormulaInput>7750096</FormulaInput>
        </FormulaBar>

        <Sheet>
          <Corner />
          {COLUMNS.map((name, i) => (
            <ColHead key={name} $col={i + 2} $active={i === 0}>{name}</ColHead>
          ))}
          {Array.from({ length: 16 }, (_, i) => (
            <RowHead key={i} $row={i + 2} $active={i >= 2 && i <= 10}><span>{i + 1}</span></RowHead>
          ))}
          <TitleCell>Как превратить цифры в формат сотового телефона</TitleCell>
          <HeaderCell>Номер телефона</HeaderCell>
          {PHONES.map((phone, i) => (
            <PhoneCell key={phone} $row={i + 4} $current={i === 0} $last={i === PHONES.length - 1}>{phone}</PhoneCell>
          ))}
          <FormulaCell>+7-981</FormulaCell>
        </Sheet>

        <SheetTabs>
          <TabNav><Triangle color="#bdbdbd" /></TabNav>
          <SheetTab>Лист1</SheetTab>
          <AddSheet>
            <svg width="17" height="17" viewBox="0 0 17 17" fill="none" stroke="#666" strokeWidth="1.4">
              <circle cx="8.5" cy="8.5" r="7.5" />
              <path d="M8.5 4.5v8M4.5 8.5h8" strokeWidth="1.8" />
            </svg>
          </AddSheet>
          <HScroll>
            <HDots />
            <HButton><Triangle flip color="#666" /></HButton>
            <HTrack />
            <HGap />
            <HEnd />
          </HScroll>
        </SheetTabs>

        <StatusBar>
          <StatusText $width={42} $left={-24}>ГОТОВО</StatusText>
          <Gap $w={14} />
          <svg width="14" height="14" viewBox="0 0 14 14">
            <rect x="0.5" y="2.5" width="13" height="11" fill="#dbe9e1" stroke="#fff" />
            <circle cx="2.5" cy="2" r="2" fill="#fff" />
            <path d="M3 6h8M3 8h8M3 10h8M5 5v7M7 5v7M9 5v7" stroke="#217346" strokeWidth="0.7" />
          </svg>
          <StatusText $width={100} $left={694} $spacing={-0.4}>СРЕДНЕЕ: 7516106</StatusText>
          <StatusText $width={90} $left={20}>КОЛИЧЕСТВО: 9</StatusText>
          <StatusText $width={90} $left={12} $spacing={-0.8}>СУММА: 67644954</StatusText>
          <Gap $w={3} />
          <ViewButton $active>
            <svg width="14" height="13" viewBox="0 0 14 13" fill="none" stroke="#d8e8de"><path d="M0.5 0.5h13v12h-13zM0.5 4.5h13M0.5 8.5h13M5 0.5v12M9.5 0.5v12" /></svg>
          </ViewButton>
          <ViewButton>
            <svg width="14" height="13" viewBox="0 0 14 13" fill="none" stroke="#b8d2c3"><path d="M0.5 0.5h13v12h-13zM3.5 2.5h7v8h-7zM5 5h4M5 7h4" /></svg>
          </ViewButton>
          <ViewButton>
            <svg width="14" height="13" viewBox="0 0 14 13"><path d="M0.5 0.5h13v12h-13z" fill="none" stroke="#e6f0ea" /><rect x="1" y="1" width="6" height="8" fill="#fff" /><rect x="8" y="1" width="5" height="8" fill="#e6f0ea" /></svg>
          </ViewButton>
          <Gap $w={9} />
          <ZoomSign>-</ZoomSign>
          <ZoomSlider />
          <ZoomSign>+</ZoomSign>
        </StatusBar>
        <BottomStrip />

        <Dialog>
          <DialogTitle>
            Формат ячеек
            <HelpMark>?</HelpMark>
            <svg width="12" height="12" viewBox="0 0 12 12" stroke="#333" strokeWidth="1"><path d="M1 1L11 11M11 1L1 11" /></svg>
          </DialogTitle>
          <DialogTabs>
            {dialogTabs.map(([name, width, active]) => (
              <DialogTab key={name} $width={width} $active={active}>{name}</DialogTab>
            ))}
          </DialogTabs>
          <Panel>
            <PanelColumns>
              <LeftColumn>
                <FieldLabel><u>Ч</u>исловые форматы:</FieldLabel>
                <ListBox>
                  <ListItems>
                    {CATEGORIES.map((name, i) => (
                      <ListItem key={name} $selected={i === CATEGORIES.length - 1}>{name}</ListItem>
                    ))}
                  </ListItems>
                  <ScrollBar $dim>
                    <ScrollArrow><ChevronUp color="#bdbdbd" /></ScrollArrow>
                    <ScrollGap />
                    <ScrollArrow><ChevronDown color="#bdbdbd" /></ScrollArrow>
                  </ScrollBar>
                </ListBox>
              </LeftColumn>
              <RightColumn>
                <SampleBox>
                  <legend>Образец</legend>
                  <div>7750096</div>
                </SampleBox>
                <TypeLabel><u>Т</u>ип:</TypeLabel>
                <TypeInput />
                <CodeBox>
                  <CodeItems>
                    {CODES.map((code) => (
                      <CodeItem key={code}>{code}</CodeItem>
                    ))}
                  </CodeItems>
                  <ScrollBar>
                    <ScrollArrow><ChevronUp color="#444" /></ScrollArrow>
                    <ScrollThumb />
                    <ScrollGap />
                    <ScrollArrow><ChevronDown color="#444" /></ScrollArrow>
                  </ScrollBar>
                </CodeBox>
                <DeleteRow><DisabledButton>Удалить</DisabledButton></DeleteRow>
              </RightColumn>
            </PanelColumns>
            <Hint>Введите код числового формата, используя один из существующих кодов в качестве образца.</Hint>
          </Panel>
          <DialogFooter>
            <DialogButton $primary>ОК</DialogButton>
            <DialogButton>Отмена</DialogButton>
          </DialogFooter>
        </Dialog>

        <IBeam width="10" height="20" viewBox="0 0 10 20" fill="none" stroke="#111" strokeWidth="1.4">
          <path d="M1 1h3l1 1 1-1h3M5 2v16M1 19h3l1-1 1 1h3" />
        </IBeam>
      </Root>
    </>
  );
}
